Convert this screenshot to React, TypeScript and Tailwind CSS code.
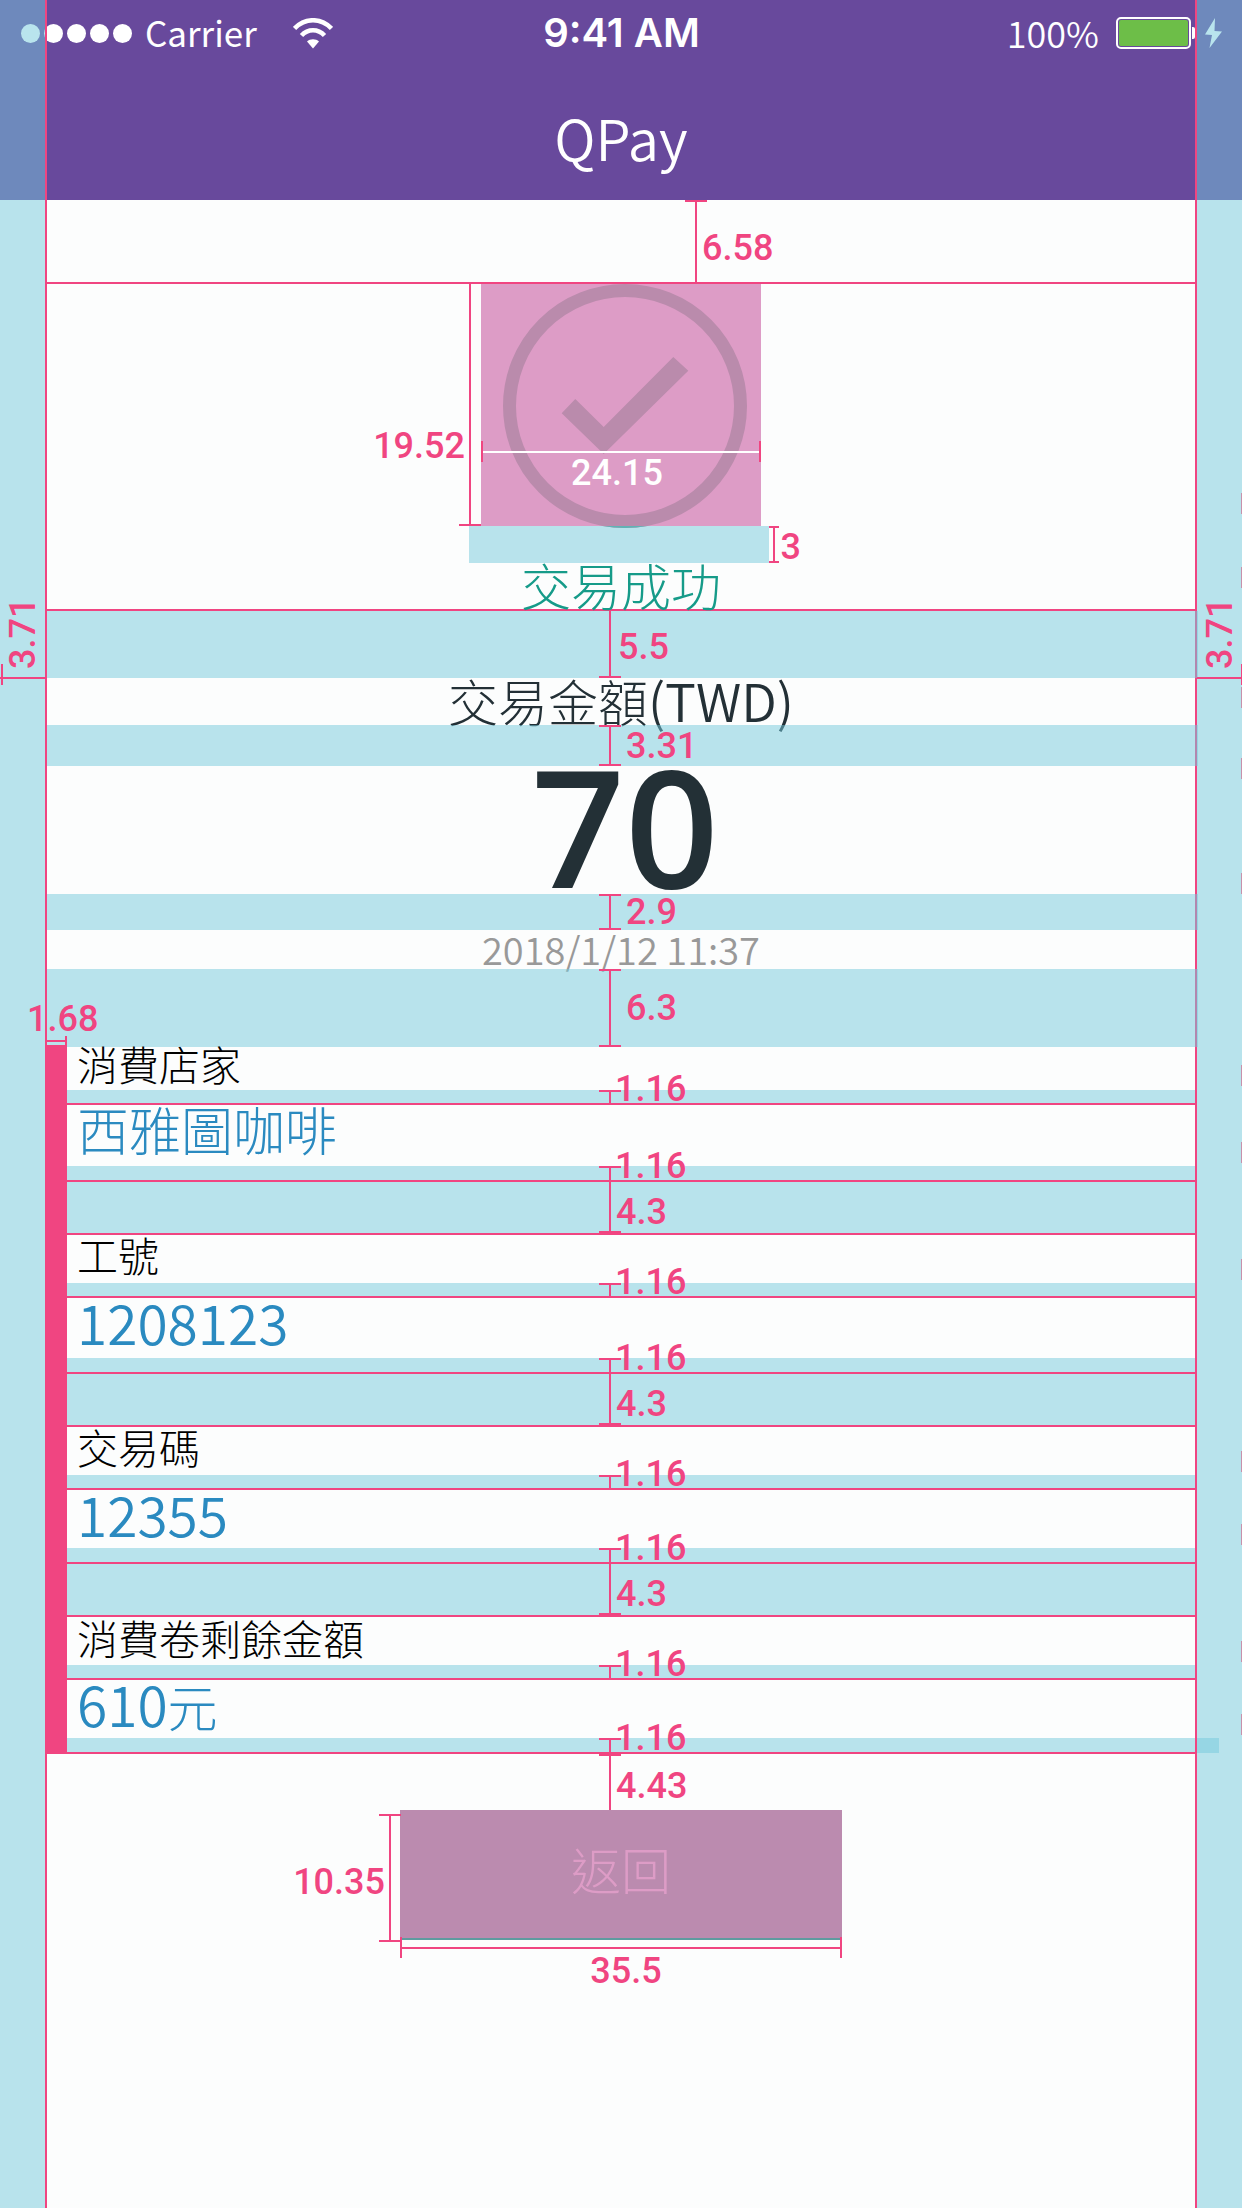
import type { ReactNode } from "react";

const MEASURE =
  "font-['Roboto',sans-serif] text-[36px] leading-[36px] font-medium whitespace-nowrap text-[#f04581]";

/* Vertical dimension line with optional end ticks, filling its positioned parent. */
function Gauge({
  top = true,
  bottom = true,
  place = "left-1/2 -ml-[22px]",
}: {
  top?: boolean;
  bottom?: boolean;
  place?: string;
}) {
  return (
    <span aria-hidden="true" className={`absolute inset-y-0 flex w-[22px] flex-col items-center ${place}`}>
      {top && <span className="h-[2px] w-full bg-[#f04581]" />}
      <span className="w-[2px] flex-1 bg-[#f04581]" />
      {bottom && <span className="h-[2px] w-full bg-[#f04581]" />}
    </span>
  );
}

/* Tinted full-width spacing band with a centred measurement. */
function Band({
  size,
  value,
  shift = "pl-[5px]",
  topTick = true,
}: {
  size: string;
  value: string;
  shift?: string;
  topTick?: boolean;
}) {
  return (
    <div className={`relative -mr-[3px] bg-[#74c9db]/50 ${size}`}>
      <div className="relative mr-[3px] flex h-full items-center">
        <Gauge top={topTick} />
        <span className="w-1/2" />
        <span className={`${MEASURE} ${shift}`}>{value}</span>
      </div>
    </div>
  );
}

/* Thin band closed by a rule; the measurement sits on the rule. */
function SlimBand({ size, children }: { size: string; children?: ReactNode }) {
  return (
    <div className={`relative border-b-2 border-[#f04581] bg-[#74c9db]/50 ${size}`}>
      <Gauge bottom={false} />
      <span className={`absolute -bottom-[4px] left-1/2 -ml-[6px] ${MEASURE}`}>1.16</span>
      {children}
    </div>
  );
}

const ROWS = [
  { label: "消費店家", value: "西雅圖咖啡", labelBox: "h-[43px] leading-[32px]", valueBox: "h-[61px] text-[52px] leading-[48px] font-light", gap: true },
  { label: "工號", value: "1208123", labelBox: "h-[48px] leading-[38px]", valueBox: "h-[60px] text-[55px] leading-[46px] font-[350]", gap: true },
  { label: "交易碼", value: "12355", labelBox: "h-[48px] leading-[38px]", valueBox: "h-[58px] text-[55px] leading-[46px] font-[350]", gap: true },
  { label: "消費卷剩餘金額", value: "610", unit: "元", labelBox: "h-[48px] leading-[40px]", valueBox: "h-[58px] text-[55px] leading-[46px] font-[350]", gap: false },
];

const EDGE_TICKS = [
  "top-[493px]", "top-[567px]", "top-[687px]", "top-[758px]", "top-[873px]", "top-[1065px]",
  "top-[1142px]", "top-[1259px]", "top-[1451px]", "top-[1524px]", "top-[1641px]", "top-[1714px]",
];

function StatusBar() {
  return (
    <div className="grid h-[66px] grid-cols-[1fr_auto_1fr] items-center pr-[20px] pl-[21px] text-white">
      <div className="flex items-center">
        <div className="flex gap-[4px]">
          {[0, 1, 2, 3, 4].map((i) => (
            <span key={i} className="size-[19px] rounded-full bg-white" />
          ))}
        </div>
        <span className="ml-[13px] pb-[3px] text-[35px] leading-[36px]">Carrier</span>
        <svg className="ml-[36px] h-[31px] w-[40px]" viewBox="0 0 40 31" fill="none" aria-hidden="true">
          <path d="M1.5 10.5C12 -.5 28 -.5 38.500 10.500" stroke="#fff" strokeWidth="4.600" />
          <path d="M8.500 17.500C15 10.500 25 10.500 31.500 17.500" stroke="#fff" strokeWidth="4.600" />
          <path d="M14 23.500C17 20.500 23 20.500 26 23.500L20 30.500Z" fill="#fff" />
        </svg>
      </div>
      <span className="font-['Inter',sans-serif] text-[40px] leading-[40px] font-semibold">9:41 AM</span>
      <div className="flex items-center justify-end">
        <span className="mr-[17px] pb-[3px] text-[36px] leading-[36px] font-[350]">100%</span>
        <span className="flex h-[32px] w-[75px] rounded-[5px] border-2 border-white p-[1px]">
          <span className="flex-1 rounded-[2px] bg-[#6dbe48]" />
        </span>
        <span className="ml-[1px] h-[12px] w-[3px] rounded-r-[2px] bg-white" />
        <svg className="ml-[10px] h-[30px] w-[17px]" viewBox="0 0 17 30" aria-hidden="true">
          <path d="M10 0L0 16.500L7 17L4.500 30L17 13.500L9.500 13Z" fill="#fff" />
        </svg>
      </div>
    </div>
  );
}

function SuccessMark() {
  return (
    <div className="relative h-[242px] w-[280px] bg-[#dd9cc6]">
      <svg className="absolute top-0 left-0 z-10 h-[244px] w-[280px]" viewBox="0 0 280 244" fill="none" role="img" aria-label="成功">
        <defs>
          <clipPath id="ring-foot">
            <path d="M0 242H280V244H0Z" />
          </clipPath>
        </defs>
        <circle cx="144" cy="122" r="115.500" stroke="#ba8bac" strokeWidth="13" />
        <circle cx="144" cy="122" r="115.500" stroke="#5fb3b5" strokeWidth="13" clipPath="url(#ring-foot)" />
        <path d="M80.700 129.300L94.300 115L122.700 143L192.300 73L207.300 86.700L122.700 170Z" fill="#ba8bac" />
      </svg>
      <Gauge top={false} place="right-full" />
      <span className={`absolute top-[144px] right-full mr-[16px] ${MEASURE}`}>19.52</span>
      <div className="absolute inset-x-0 top-[157px] z-20 flex h-[21px] items-center border-x-2 border-[#f04581]">
        <span className="h-[2px] flex-1 bg-white" />
      </div>
      <span className="absolute inset-x-0 top-[171px] z-20 pr-2 text-center font-['Roboto',sans-serif] text-[36px] leading-[36px] font-medium text-white">
        24.15
      </span>
    </div>
  );
}

function SideMeasure({ place, tick }: { place: string; tick: string }) {
  return (
    <div className={`absolute top-[603px] h-[82px] w-[45px] ${place}`}>
      <span className={`absolute top-0 left-[5px] h-[66px] rotate-180 [writing-mode:vertical-rl] ${MEASURE}`}>3.71</span>
      <span className="absolute inset-x-0 top-[74px] h-[2px] bg-[#f04581]" />
      <span className={`absolute bottom-0 h-[21px] bg-[#f04581] ${tick}`} />
    </div>
  );
}

export default function App() {
  return (
    <div className="relative min-h-screen overflow-hidden bg-[#fcfdfd] font-['Noto_Sans_CJK_TC',sans-serif]">
      <div aria-hidden="true" className="absolute inset-y-0 left-0 w-[47px] border-r-2 border-[#f04581] bg-[#74c9db]/50" />
      <div aria-hidden="true" className="absolute inset-y-0 right-0 w-[47px] border-l-2 border-[#f04581] bg-[#74c9db]/50" />

      <header className="h-[200px] bg-[#68499c] text-white">
        <StatusBar />
        <h1 className="flex h-[134px] items-center justify-center pt-2 text-[56px] leading-[64px] font-[350]">QPay</h1>
      </header>

      <main className="mx-[47px]">
        <div className="relative flex h-[84px] items-center border-b-2 border-[#f04581] pt-[14px]">
          <Gauge bottom={false} place="left-1/2 ml-[64px]" />
          <span className="w-1/2" />
          <span className={`pl-[81px] ${MEASURE}`}>6.58</span>
        </div>

        <section className="flex flex-col items-center">
          <SuccessMark />
          <div className="relative mr-[4px] flex h-[37px] w-[300px] items-center bg-[#74c9db]/50">
            <div className="absolute inset-y-0 left-full flex w-[32px] items-center gap-[2px]">
              <span className="flex h-full w-[13px] flex-col items-center">
                <span className="h-[2px] w-full bg-[#f04581]" />
                <span className="w-[2px] flex-1 bg-[#f04581]" />
                <span className="h-[2px] w-full bg-[#f04581]" />
              </span>
              <span className={`pt-[5px] ${MEASURE}`}>3</span>
            </div>
          </div>
          <p className="h-[46px] text-[50px] leading-[42px] font-light text-[#169b89]">交易成功</p>
        </section>

        <div className="border-t-2 border-[#f04581]" />
        <Band size="h-[67px]" value="5.5" shift="-ml-[3px] pt-[4px]" topTick={false} />
        <p className="h-[47px] text-center text-[50px] leading-[44px] font-light text-[#233036]">
          交易金額<span className="text-[52px] font-[350]">(TWD)</span>
        </p>
        <Band size="h-[41px]" value="3.31" />
        <p className="h-[128px] pl-2 text-center font-['Open_Sans',sans-serif] text-[164px] leading-[118px] font-semibold text-[#233036]">
          70
        </p>
        <Band size="h-[36px]" value="2.9" />
        <p className="h-[39px] text-center text-[38px] leading-[37px] font-[350] text-[#999999]">2018/1/12 11:37</p>
        <Band size="h-[78px]" value="6.3" />

        <section className="relative">
          <div className="absolute -top-[2px] bottom-0 -left-[2px] z-10 w-[22px] bg-[#f04581]">
            <div className="absolute right-0 bottom-full flex h-[9px] w-[22px] items-center border-r-2 border-[#f04581]">
              <span className="h-[2px] flex-1 bg-[#f04581]" />
            </div>
            <span className={`absolute bottom-full -left-[18px] mb-[8px] ${MEASURE}`}>1.68</span>
          </div>
          <dl>
            {ROWS.map((row) => (
              <div key={row.label}>
                <dt className={`pl-[30px] text-[41px] font-light text-black ${row.labelBox}`}>{row.label}</dt>
                <dd>
                  <SlimBand size="h-[15px]" />
                  <div className={`pl-[30px] text-[#2a8ac0] ${row.valueBox}`}>
                    {row.value}
                    {row.unit && <span className="text-[50px] font-light">{row.unit}</span>}
                  </div>
                  <SlimBand size="h-[16px]">
                    {!row.gap && (
                      <span className="absolute top-0 -right-[24px] h-[15px] w-[22px] bg-[#74c9db]/50" />
                    )}
                  </SlimBand>
                  {row.gap && (
                    <div className="relative flex h-[53px] items-center border-b-2 border-[#f04581] bg-[#74c9db]/50 pt-[8px]">
                      <Gauge top={false} />
                      <span className="w-1/2" />
                      <span className={`-ml-[5px] ${MEASURE}`}>4.3</span>
                    </div>
                  )}
                </dd>
              </div>
            ))}
          </dl>
        </section>

        <div className="relative flex h-[56px] items-center pt-[8px]">
          <Gauge bottom={false} />
          <span className="w-1/2" />
          <span className={`-ml-[5px] ${MEASURE}`}>4.43</span>
        </div>

        <div className="flex justify-center">
          <div className="relative">
            <button
              type="button"
              className="block h-[130px] w-[442px] border-b-2 border-[#5f9ba0] bg-[#bb8baf] pb-[12px] text-[50px] leading-[60px] font-light text-[#dd9cc6]"
            >
              返回
            </button>
            <div className="absolute top-[4px] right-full -bottom-[2px] w-[21px]">
              <Gauge place="left-0" />
            </div>
            <span className={`absolute top-[54px] right-full mr-[15px] ${MEASURE}`}>10.35</span>
            <div className="absolute inset-x-0 top-[127px] flex h-[21px] items-center border-x-2 border-[#f04581]">
              <span className="h-[2px] flex-1 bg-[#f04581]" />
            </div>
            <span className={`absolute inset-x-0 top-[143px] pl-[10px] text-center ${MEASURE}`}>35.5</span>
          </div>
        </div>
      </main>

      <SideMeasure place="left-0" tick="left-[1px] w-[2px]" />
      <SideMeasure place="right-0" tick="right-0 w-[1px]" />
      {EDGE_TICKS.map((top) => (
        <span key={top} aria-hidden="true" className={`absolute right-0 h-[21px] w-px bg-[#c891ab] ${top}`} />
      ))}
    </div>
  );
}
